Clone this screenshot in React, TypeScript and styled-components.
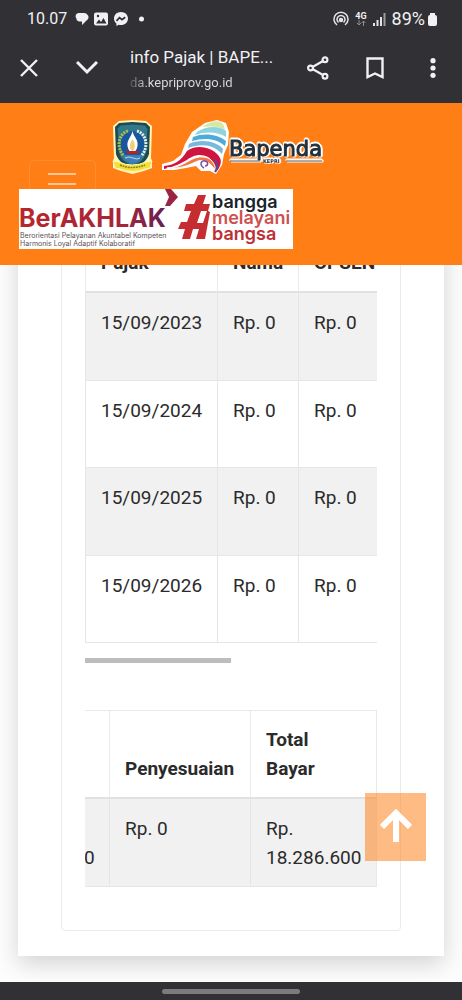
import React from 'react';
import styled, { createGlobalStyle } from 'styled-components';

const GlobalStyle = createGlobalStyle`
  *, *::before, *::after { box-sizing: border-box; }
  body {
    margin: 0;
    background: #fdfdfd;
    color: #2b2b2b;
    font-family: Roboto, "Liberation Sans", sans-serif;
    font-size: 19px;
    line-height: 29px;
  }
`;

const Screen = styled.div`
  display: flex;
  flex-direction: column;
  min-height: 100vh;
  overflow-x: hidden;
`;

const Chrome = styled.div`
  position: relative;
  z-index: 3;
  background: #303035;
  color: #f1f1f3;
`;

const StatusBar = styled.div`
  display: flex;
  justify-content: space-between;
  align-items: center;
  height: 38px;
  padding: 0 25px 0 27px;
  font-size: 16px;
  line-height: 20px;
`;

const StatusGroup = styled.div<{ $gap: number }>`
  display: flex;
  align-items: center;
  gap: ${(p) => p.$gap}px;
`;

const BatteryLevel = styled.span`
  font-size: 18px;
`;

const Network = styled.span`
  display: flex;
  flex-direction: column;
  align-items: center;
  font-size: 9px;
  font-weight: 700;
  line-height: 8px;
`;

const BrowserBar = styled.div`
  display: flex;
  align-items: center;
  height: 65px;
  padding: 0 17px 5px 17px;
`;

const IconButton = styled.button<{ $space?: number }>`
  display: flex;
  align-items: center;
  justify-content: center;
  flex: none;
  width: 24px;
  height: 28px;
  margin: 0 0 0 ${(p) => p.$space ?? 0}px;
  padding: 0;
  border: 0;
  background: none;
  color: inherit;
`;

const PageInfo = styled.div`
  flex: 1;
  min-width: 0;
  margin-left: 31px;
  padding-top: 4px;
`;

const PageTitle = styled.div`
  font-size: 17px;
  line-height: 26px;
  white-space: nowrap;
`;

const PageUrl = styled.div`
  font-size: 13px;
  line-height: 26px;
  white-space: nowrap;
  color: transparent;
  background: linear-gradient(90deg, #55555a, #dededf 18px);
  background-clip: text;
  -webkit-background-clip: text;
`;

const SiteHeader = styled.header`
  position: relative;
  z-index: 2;
  height: 162px;
  padding-top: 17px;
  background: #ff7f16;
`;

const Logos = styled.div`
  position: relative;
  display: flex;
  gap: 8px;
  padding-left: 24%;
`;

const OutlinedMark = styled.g`
  filter: drop-shadow(1px 1px 0 #fff) drop-shadow(-1px -1px 0 #fff) drop-shadow(1px -1px 0 #fff);
`;

const MenuToggle = styled.button`
  position: absolute;
  top: 57px;
  left: 29px;
  display: flex;
  flex-direction: column;
  gap: 8px;
  width: 67px;
  height: 48px;
  padding: 12px 18px;
  border: 1px solid rgba(255, 255, 255, 0.1);
  border-radius: 5px;
  background: none;
`;

const MenuLine = styled.span`
  width: 28px;
  height: 2px;
  background: rgba(255, 255, 255, 0.55);
`;

const Banner = styled.svg`
  position: relative;
  display: block;
  margin: 13px 0 0 19px;
`;

const Main = styled.main`
  flex: 1;
  margin-top: -79px;
  padding: 0 18px 26px;
`;

const Card = styled.section`
  padding: 23px 43px 25px;
  background: #fff;
  box-shadow: 0 8px 22px rgba(0, 0, 0, 0.17);
`;

const Panel = styled.div`
  padding: 24px 23px 43px;
  border: 1px solid #ebebeb;
  border-radius: 4px;
`;

const TableScroll = styled.div`
  display: flex;
  overflow: hidden;
`;

const RightScroll = styled(TableScroll)`
  justify-content: flex-end;
`;

const ScrollThumb = styled.div`
  width: 50%;
  height: 5px;
  margin: 15px 0 47px;
  background: #bdbdbd;
`;

const DataTable = styled.table`
  width: 100%;
  flex: none;
  border-spacing: 0;
  table-layout: fixed;
`;

const TotalsTable = styled(DataTable)`
  width: calc(100% + 2px);
  border-top: 1px solid #e9e9e9;
  border-right: 1px solid #e9e9e9;
`;

const HeadCell = styled.th<{ $width?: number }>`
  width: ${(p) => (p.$width ? `${p.$width}px` : 'auto')};
  padding: 14px 0 14px 15px;
  border-left: 1px solid #e9e9e9;
  border-bottom: 2px solid #e1e1e1;
  font-weight: 700;
  text-align: left;
  vertical-align: bottom;
`;

const Cell = styled.td<{ $end?: boolean }>`
  padding: 15px ${(p) => (p.$end ? 15 : 0)}px 14px ${(p) => (p.$end ? 0 : 15)}px;
  border-left: 1px solid #e6e6e6;
  border-bottom: 1px solid #e6e6e6;
  text-align: ${(p) => (p.$end ? 'right' : 'left')};
  vertical-align: ${(p) => (p.$end ? 'bottom' : 'top')};
`;

const Row = styled.tr`
  height: 87px;
  &:nth-child(odd) {
    height: 88px;
    background: #f1f1f1;
  }
`;

const TopButton = styled.button`
  position: fixed;
  right: 36px;
  bottom: 139px;
  z-index: 4;
  display: flex;
  align-items: center;
  justify-content: center;
  width: 61px;
  height: 68px;
  padding: 0 0 3px;
  border: 0;
  background: rgba(255, 127, 22, 0.53);
`;

const GestureBar = styled.div`
  display: flex;
  justify-content: center;
  align-items: center;
  height: 18px;
  background: #303035;
`;

const GesturePill = styled.div`
  width: 30%;
  height: 5px;
  border-radius: 3px;
  background: #7c7c7e;
`;

const dueDates = ['15/09/2023', '15/09/2024', '15/09/2025', '15/09/2026'];

function NotificationIcons() {
  return (
    <svg width="72" height="16" viewBox="0 0 72 16" fill="#f1f1f3" aria-hidden="true">
      <path d="M4 2h5c2 0 3 .8 3.500 2C14 4.500 14 8.500 11.500 9.500L7 14v-3.500C3 11 1 9 1.500 7.500-.5 5.500 1 2 4 2Z" />
      <rect x="19" y="1.500" width="14" height="13" rx="2" />
      <path d="m21 12.500 3-4 2 2.500 2.500-4 3 5.500Z" fill="#303035" />
      <circle cx="23" cy="5" r="1.200" fill="#303035" />
      <path d="M46 1c-4 0-7 2.800-7 6.500 0 2 .9 3.700 2.400 4.900V15l2.300-1.200c.7.200 1.500.3 2.300.3 4 0 7-2.900 7-6.600S50 1 46 1Z" />
      <path d="m41.500 9.800 3-3.200 2.500 2 3.200-2.400" fill="none" stroke="#303035" strokeWidth="1.700" />
      <circle cx="66.500" cy="8" r="2.500" />
    </svg>
  );
}

function Crest() {
  return (
    <svg width="43" height="54" viewBox="0 0 43 54" role="img" aria-label="Kepulauan Riau">
      <path d="M8 1 21.500 0 35 1l6 5-1 32 1 3v7l-8 3-11.500 3L10 51l-8-3v-7l1-3L2 6Z" fill="#fff5b8" />
      <path d="M8 3 21.500 2 35 3l4 4-1 27c-2 7-8 11-16.500 15C13 45 7 41 5 34L4 7Z" fill="#1d4a50" />
      <path d="M9 5 21.500 4 34 5l3 4-2 25c-2 6-6 9-13.500 12C14 43 10 40 8 34L6 9Z" fill="#31788a" stroke="#1d4a50" />
      <ellipse cx="21.500" cy="25" rx="12" ry="14" fill="#17579b" />
      <path d="M17 11C7 14 5 28 13 36" fill="none" stroke="#a9bd52" strokeWidth="3" strokeDasharray="2 1" />
      <path d="M26 11c10 3 12 17 4 25" fill="none" stroke="#e3efee" strokeWidth="3" strokeDasharray="2 1" />
      <path d="M21.500 11c1 6 6 8 5 15-1 4-2 6-5 6s-4-2-5-6c-1-6 4-9 5-15Z" fill="#fff" />
      <path d="M21.500 19c4 6 2 11 0 12-3-1-4-6 0-12Z" fill="#efd07a" />
      <path d="m14 31 15 0-3 3H17Z" fill="#b72325" />
      <path d="M12 35h19l-3 6-6.500 3-6.500-3Z" fill="#3f7fb8" />
      <path d="M14 38q4-2 8 0t7 0" stroke="#b7d7e8" fill="none" />
      <path d="m2 41 6 1q13 6 27 0l6-1-2 7-5 1q-12 5-25 0l-5-1Z" fill="#f4df35" stroke="#fff7bd" />
      <path d="M9 45q12 5 25 0" fill="none" stroke="#89802b" strokeWidth="1.500" strokeDasharray="2 .7" />
    </svg>
  );
}

function BapendaLogo() {
  return (
    <svg width="163" height="56" viewBox="0 0 163 56" role="img" aria-label="Bapenda Kepri">
      <path d="M0 44 11 41 19 35 23 24 30 12 43 3 55 0 64 3 67 12 66 25 62 34 60 45 54 54 48 51H39L34 46 24 48 12 50 0 50Z" fill="#fff" />
      <path d="M40 7C51-1 60 0 62 6l1 4c-6-4-15-4-23-3Z" fill="#d6e9a4" />
      <path d="M35 12c10-7 23-6 29-1v6c-8-5-19-6-31-2Z" fill="#8dd4df" />
      <path d="M31 17c12-5 26-2 33 4l-1 5c-8-7-19-9-33-5Z" fill="#4eabd9" />
      <path d="M27 24c12-6 29-2 34 5l-1 5c-8-9-19-11-34-6Z" fill="#78b9dc" />
      <path d="M2 46c10-1 17-5 23-15 10-8 28-3 33 7 2 4 0 10-4 14-1-8-5-17-16-17-11 0-13 9-36 14Z" fill="#cf143f" />
      <path d="M5 48c18 0 24-13 37-11 8 1 11 7 12 14-6-9-12-12-18-10-8 3-14 8-31 7Z" fill="#f27642" stroke="#fff" />
      <path d="M42 48c-5-3-3-8 1-7s3 5 0 5" fill="none" stroke="#7951a0" strokeWidth="1.500" />
      <path d="M52 40c5 3 3 9 1 12" fill="none" stroke="#5b478d" strokeWidth="2" />
      <OutlinedMark fontFamily="DejaVu Sans" fill="#22303c">
        <text x="67" y="36" fontSize="21" stroke="#22303c">Bapenda</text>
        <text x="101" y="43" fontSize="5" fontWeight="700">KEPRI</text>
        <path d="M68 41h30M124 41h36" stroke="#526270" />
      </OutlinedMark>
    </svg>
  );
}

function BerAkhlakBanner() {
  return (
    <Banner width="274" height="60" viewBox="0 0 274 60" role="img" aria-label="BerAKHLAK bangga melayani bangsa">
      <defs>
        <linearGradient id="akhlak" x1="0" x2="1">
          <stop offset="0" stopColor="#b5272b" />
          <stop offset=".7" stopColor="#a7253b" />
          <stop offset="1" stopColor="#642052" />
        </linearGradient>
      </defs>
      <path fill="#fff" d="M0 0h274v60H0z" />
      <text x="0" y="38" fontFamily="Inter" fontWeight="700" fontSize="25" fill="url(#akhlak)">BerAKHLAK</text>
      <path d="M146 0h6l7 8-8 9h-5l4-9Z" fill="#9b2344" />
      <g fontFamily="Inter" fontSize="7" fill="#5b5055">
        <text x="1" y="49">Berorientasi Pelayanan Akuntabel Kompeten</text>
        <text x="1" y="57">Harmonis Loyal Adaptif Kolaboratif</text>
      </g>
      <path d="M179 6h8l-3 9h7l-2 7h-7l-4 12h6l4-12h1l2 1-5 27h-9l3-10h-6l-3 10h-8l3-10h-7l3-7h6l4-11h-7l2-7h8Z" fill="#c52d31" />
      <g fontFamily="Inter" fontWeight="600" fontSize="18">
        <text x="193" y="19" fill="#18242a">bangga</text>
        <text x="193" y="35" fill="#ce5051">melayani</text>
        <text x="193" y="51" fill="#be3036">bangsa</text>
      </g>
    </Banner>
  );
}

export default function App() {
  return (
    <Screen>
      <GlobalStyle />
      <Chrome>
        <StatusBar>
          <StatusGroup $gap={8}>
            <span>10.07</span>
            <NotificationIcons />
          </StatusGroup>
          <StatusGroup $gap={6}>
            <svg width="16" height="16" viewBox="0 0 16 16" fill="none" stroke="#e4e4e6" strokeWidth="1.500" aria-hidden="true">
              <path d="M4 14a7 7 0 1 1 8 0M5.500 11.500a4 4 0 1 1 5 0" />
              <circle cx="8" cy="9" r="1.500" fill="#e4e4e6" />
            </svg>
            <Network>
              4G
              <svg width="10" height="6" viewBox="0 0 10 6" fill="none" stroke="#8c8c91" aria-hidden="true">
                <path d="M3 0v5M1 3l2 2 2-2M7.500 6V1M5.500 3l2-2 2 2" />
              </svg>
            </Network>
            <svg width="13" height="13" viewBox="0 0 13 13" fill="#e4e4e6" aria-hidden="true">
              <path d="M0 10h2v3H0zM3.500 7h2v6h-2zM7 4h2v9H7z" />
              <path d="M10.500 0h2v13h-2z" opacity=".6" />
            </svg>
            <StatusGroup $gap={3}>
              <BatteryLevel>89%</BatteryLevel>
              <svg width="9" height="13" viewBox="0 0 9 13" fill="#f1f1f3" aria-hidden="true">
                <path d="M2 0h5v2q2 0 2 2v7q0 2-2 2H2q-2 0-2-2V4q0-2 2-2Z" />
              </svg>
            </StatusGroup>
          </StatusGroup>
        </StatusBar>
        <BrowserBar>
          <IconButton aria-label="Close">
            <svg width="18" height="18" viewBox="0 0 18 18" stroke="currentColor" strokeWidth="2.400">
              <path d="m1 1 16 16M17 1 1 17" />
            </svg>
          </IconButton>
          <IconButton aria-label="Minimize" $space={34}>
            <svg width="22" height="14" viewBox="0 0 22 14" fill="none" stroke="currentColor" strokeWidth="3">
              <path d="m1 1 10 10L21 1" />
            </svg>
          </IconButton>
          <PageInfo>
            <PageTitle>info Pajak | BAPE...</PageTitle>
            <PageUrl>da.kepriprov.go.id</PageUrl>
          </PageInfo>
          <IconButton aria-label="Share">
            <svg width="24" height="26" viewBox="0 0 24 26" fill="none" stroke="currentColor" strokeWidth="2.200">
              <path d="M6.500 12 17 6M6.500 14 17 20" />
              <circle cx="4.500" cy="13" r="2.400" />
              <circle cx="19" cy="4.800" r="2.400" />
              <circle cx="19" cy="21.200" r="2.400" />
            </svg>
          </IconButton>
          <IconButton aria-label="Bookmark" $space={33}>
            <svg width="18" height="22" viewBox="0 0 18 22" fill="none" stroke="currentColor" strokeWidth="2.400">
              <path d="M1.500 1.500h15v18.500L9 16.500 1.500 20Z" />
            </svg>
          </IconButton>
          <IconButton aria-label="More" $space={34}>
            <svg width="6" height="20" viewBox="0 0 6 20" fill="currentColor">
              <circle cx="3" cy="2.700" r="2.600" />
              <circle cx="3" cy="10" r="2.600" />
              <circle cx="3" cy="17.300" r="2.600" />
            </svg>
          </IconButton>
        </BrowserBar>
      </Chrome>

      <SiteHeader>
        <MenuToggle aria-label="Menu">
          <MenuLine />
          <MenuLine />
        </MenuToggle>
        <Logos>
          <Crest />
          <BapendaLogo />
        </Logos>
        <BerAkhlakBanner />
      </SiteHeader>

      <Main>
        <Card>
          <Panel>
            <TableScroll>
              <DataTable>
                <thead>
                  <tr>
                    <HeadCell $width={132}>Pajak</HeadCell>
                    <HeadCell $width={81}>Nama</HeadCell>
                    <HeadCell>OPSEN</HeadCell>
                  </tr>
                </thead>
                <tbody>
                  {dueDates.map((date) => (
                    <Row key={date}>
                      <Cell>{date}</Cell>
                      <Cell>Rp. 0</Cell>
                      <Cell>Rp. 0</Cell>
                    </Row>
                  ))}
                </tbody>
              </DataTable>
            </TableScroll>
            <ScrollThumb />
            <RightScroll>
              <TotalsTable>
                <thead>
                  <tr>
                    <HeadCell $width={26} />
                    <HeadCell $width={141}>Penyesuaian</HeadCell>
                    <HeadCell>Total<br />Bayar</HeadCell>
                  </tr>
                </thead>
                <tbody>
                  <Row>
                    <Cell $end>0</Cell>
                    <Cell>Rp. 0</Cell>
                    <Cell>Rp.<br />18.286.600</Cell>
                  </Row>
                </tbody>
              </TotalsTable>
            </RightScroll>
          </Panel>
        </Card>
      </Main>

      <GestureBar>
        <GesturePill />
      </GestureBar>

      <TopButton aria-label="Back to top">
        <svg width="32" height="34" viewBox="0 0 32 34" fill="none" stroke="#fff" strokeWidth="6">
          <path d="M16 33V4M2 18 16 4l14 14" />
        </svg>
      </TopButton>
    </Screen>
  );
}
